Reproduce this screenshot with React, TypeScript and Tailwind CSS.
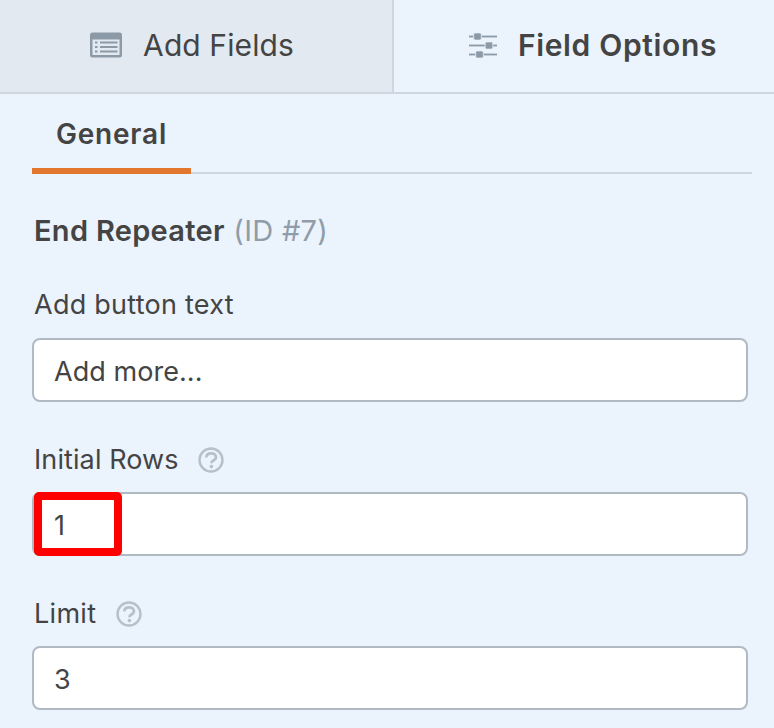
function HelpIcon() {
  return (
    <svg width="26" height="26" viewBox="0 0 26 26" fill="none">
      <circle cx="13" cy="13" r="11.5" stroke="#b6c0c9" strokeWidth="2.4" />
      <path d="M8.2 10.4c.2-2.5 2.2-4 4.9-4 2.8 0 4.8 1.5 4.8 3.7 0 1.8-1.1 2.7-2.5 3.4-1.4.7-2 1.3-2 2.7" stroke="#b6c0c9" strokeWidth="2.8" />
      <circle cx="13.4" cy="19.6" r="1.8" fill="#b6c0c9" />
    </svg>
  );
}

function FieldsIcon() {
  return (
    <svg width="32" height="26" viewBox="0 0 32 26">
      <rect width="32" height="25" y="0.5" rx="2.5" fill="#8c9aa8" />
      <rect x="2.5" y="7.5" width="27" height="15.5" fill="#e2e9f0" />
      <rect x="5" y="9.5" width="2.5" height="2" fill="#8c9aa8" />
      <rect x="5" y="14" width="2.5" height="2" fill="#8c9aa8" />
      <rect x="5" y="18.5" width="2.5" height="2" fill="#8c9aa8" />
      <rect x="10" y="9.5" width="17.5" height="2" fill="#8c9aa8" />
      <rect x="10" y="14" width="17.5" height="2" fill="#8c9aa8" />
      <rect x="10" y="18.5" width="17.5" height="2" fill="#8c9aa8" />
    </svg>
  );
}

function SlidersIcon() {
  return (
    <svg width="28" height="26" viewBox="0 0 28 26" fill="#8c9aa8">
      <rect y="3.6" width="28" height="1.8" />
      <rect y="12.6" width="28" height="1.8" />
      <rect y="21.6" width="28" height="1.8" />
      <rect x="4.7" y="0.9" width="7.6" height="7.2" rx="1.4" stroke="#ebf3fc" strokeWidth="0.8" />
      <rect x="16.2" y="9.9" width="7.6" height="7.2" rx="1.4" stroke="#ebf3fc" strokeWidth="0.8" />
      <rect x="6.7" y="18.9" width="7.6" height="7.2" rx="1.4" stroke="#ebf3fc" strokeWidth="0.8" />
    </svg>
  );
}

function TextBox({ value, marked }: { value: string; marked?: boolean }) {
  return (
    <div className="relative flex h-16 items-center rounded-lg border-2 border-[#b0bac4] bg-white pl-[20px] pt-[5px] text-[27px] tracking-[0.05px] text-[#444444]">
      {value}
      {marked && (
        <div className="absolute -top-0.5 left-0 h-16 w-[88px] rounded-[5px] border-8 border-[#ff0000]" />
      )}
    </div>
  );
}

export default function App() {
  return (
    <div className="h-[728px] w-[774px] overflow-hidden bg-[#ebf3fc] font-['Inter',sans-serif] text-[#444444]">
      {/* Panel tabs */}
      <div className="flex h-[94px] border-b-2 border-[#ced7e0]">
        <div className="flex w-[394px] items-center justify-center gap-[21px] border-r-2 border-[#ced7e0] bg-[#e2e9f0] pb-[2px] pr-[8px]">
          <FieldsIcon />
          <span className="text-[30px] tracking-[0.1px]">Add Fields</span>
        </div>
        <div className="flex flex-1 items-center justify-center gap-[21px] pb-[2px] pl-[18px]">
          <SlidersIcon />
          <span className="text-[30px] font-semibold tracking-[0.65px]">Field Options</span>
        </div>
      </div>

      <div className="pl-8 pr-[22px]">
        {/* Sub tabs */}
        <div className="flex h-20 border-b-2 border-[#ced7e0]">
          <div className="-mb-0.5 flex h-20 w-[159px] items-center justify-center border-b-[6px] border-[#e27730] pt-[5px] text-[28px] font-semibold tracking-[0.8px]">
            General
          </div>
        </div>

        <div className="mr-1 pt-[38px]">
          <div className="pl-[2px] text-[29px] leading-[38px] tracking-[0.3px]">
            <span className="font-semibold">End Repeater</span>{" "}
            <span className="text-[#8f9ca9]">(ID #7)</span>
          </div>

          <div className="mt-[37px] pl-[2px] text-[27px] leading-[36px] tracking-[0.25px]">Add button text</div>
          <div className="mt-[15px]">
            <TextBox value="Add more..." />
          </div>

          <div className="mt-[40px] flex items-center gap-[19px] pl-[2px] text-[27px] leading-[36px] tracking-[0.1px]">
            Initial Rows <HelpIcon />
          </div>
          <div className="mt-[14px]">
            <TextBox value="1" marked />
          </div>

          <div className="mt-[40px] flex items-center gap-[20px] pl-[2px] text-[27px] leading-[36px] tracking-[0.3px]">
            Limit <HelpIcon />
          </div>
          <div className="mt-[14px]">
            <TextBox value="3" />
          </div>
        </div>
      </div>
    </div>
  );
}
